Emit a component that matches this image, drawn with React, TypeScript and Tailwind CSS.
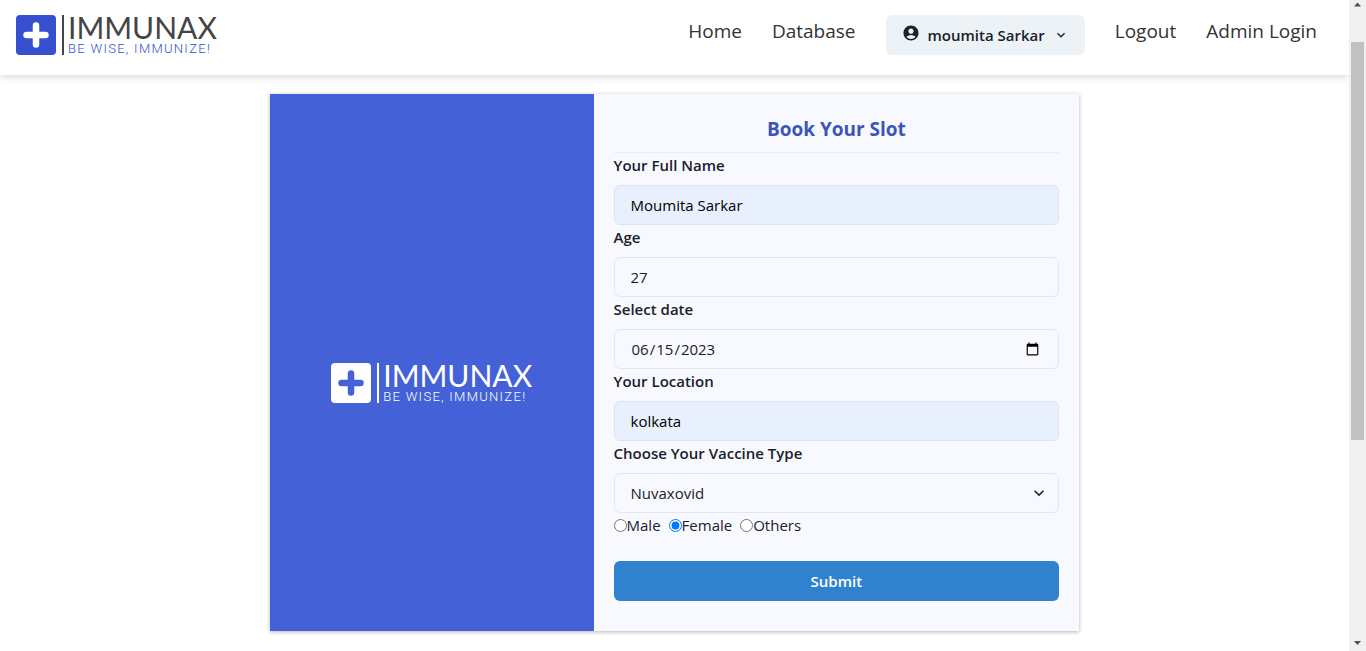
import { useId } from "react";
import type { InputHTMLAttributes, ReactNode } from "react";
import { MdAccountCircle } from "react-icons/md";

function Logo({ inverted = false }: { inverted?: boolean }) {
  return (
    <div className="flex h-10 shrink-0 gap-1">
      <svg viewBox="0 0 48 40" className="h-10 w-12" aria-hidden="true">
        <rect width="40" height="40" rx="4" className={inverted ? "fill-white" : "fill-[#3650d0]"} />
        <path
          d="M20 10.500v19M10.500 20h19"
          fill="none"
          strokeWidth="6.500"
          strokeLinecap="round"
          className={inverted ? "stroke-[#4461d7]" : "stroke-white"}
        />
        <rect x="46" width="2" height="40" className={inverted ? "fill-white" : "fill-[#454545]"} />
      </svg>
      <div className="flex flex-col whitespace-nowrap">
        <span
          className={
            inverted
              ? "font-['Lato',sans-serif] text-[30px] leading-[24px] text-white"
              : "font-['Lato',sans-serif] text-[30px] leading-[24px] text-[#454545]"
          }
        >
          IMMUNAX
        </span>
        <span
          className={
            inverted
              ? "font-['Roboto',sans-serif] text-[13px] leading-[20px] font-light tracking-widest text-white"
              : "font-['Roboto',sans-serif] text-[13px] leading-[20px] font-light tracking-widest text-[#3650d0]"
          }
        >
          BE WISE, IMMUNIZE!
        </span>
      </div>
    </div>
  );
}

function Chevron({ className }: { className: string }) {
  return (
    <svg viewBox="0 0 24 24" className={className} aria-hidden="true">
      <path fill="currentColor" d="M16.59 8.59L12 13.17 7.41 8.59 6 10l6 6 6-6z" />
    </svg>
  );
}

function NavLink({ children }: { children: ReactNode }) {
  return (
    <a href="#" className="text-[19px] leading-[32px] text-[#333]">
      {children}
    </a>
  );
}

type FieldProps = InputHTMLAttributes<HTMLInputElement> & { label: string; filled?: boolean };

function Field({ label, filled = false, ...rest }: FieldProps) {
  const id = useId();
  return (
    <div>
      <label htmlFor={id} className="mb-2 block leading-6 font-semibold">
        {label}
      </label>
      <input
        id={id}
        {...rest}
        className={
          filled
            ? "block h-10 w-full rounded-md border border-[#dde4ef] bg-[#e8f0fe] px-4 text-black"
            : "block h-10 w-full rounded-md border border-[#e2e8f0] bg-transparent px-4"
        }
      />
    </div>
  );
}

function Radio({ label, checked = false }: { label: string; checked?: boolean }) {
  return (
    <label className="flex items-center">
      <input type="radio" name="gender" defaultChecked={checked} className="size-[13px]" />
      {label}
    </label>
  );
}

function Scrollbar() {
  return (
    <div aria-hidden="true" className="sticky top-0 flex h-screen w-[17px] shrink-0 flex-col items-center bg-[#f0f0f0]">
      <svg viewBox="0 0 17 17" className="size-[17px] shrink-0">
        <path d="M5 6.500h7L8.500 2.500z" className="fill-[#505050]" />
      </svg>
      <div className="grow-[25]" />
      <div className="w-[13px] grow-[398] bg-[#c1c1c1]" />
      <div className="grow-[194]" />
      <svg viewBox="0 0 17 17" className="size-[17px] shrink-0">
        <path d="M5 7h7l-3.500 4z" className="fill-[#505050]" />
      </svg>
    </div>
  );
}

export default function App() {
  return (
    <div className="flex bg-white font-['Open_Sans','Noto_Sans',sans-serif] text-[15px] text-[#1a202c]">
      <div className="min-w-0 grow pb-5">
        <header className="flex h-[75px] items-start justify-between pt-[15px] pr-8 pl-4 shadow-[0_2px_8px_rgba(0,0,0,0.15)]">
          <Logo />
          <nav className="flex items-start gap-[30px]">
            <NavLink>Home</NavLink>
            <NavLink>Database</NavLink>
            <button
              type="button"
              className="flex h-10 items-center gap-2 rounded-md bg-[#edf2f7] px-4 font-semibold"
            >
              <MdAccountCircle className="mb-1 size-[18px]" />
              moumita Sarkar
              <Chevron className="size-4" />
            </button>
            <NavLink>Logout</NavLink>
            <NavLink>Admin Login</NavLink>
          </nav>
        </header>

        <main className="mx-auto mt-[19px] flex w-3/5 shadow-[0_1px_4px_rgba(0,0,0,0.3)]">
          <section className="flex w-2/5 items-center justify-center bg-[#4461d7] pt-10">
            <Logo inverted />
          </section>
          <form className="w-3/5 bg-[#f8f9ff] px-5 pt-5 pb-[30px]">
            <h1 className="mb-2 text-center text-[19px] leading-[30px] font-bold text-[#3c55b9]">Book Your Slot</h1>
            <hr className="border-[#e9ebf3]" />
            <Field label="Your Full Name" defaultValue="Moumita Sarkar" filled />
            <Field label="Age" inputMode="numeric" defaultValue="27" />
            <Field label="Select date" type="date" defaultValue="2023-06-15" />
            <Field label="Your Location" defaultValue="kolkata" filled />
            <label htmlFor="vaccine" className="mb-2 block leading-6 font-semibold">
              Choose Your Vaccine Type
            </label>
            <div className="relative">
              <select
                id="vaccine"
                className="block h-10 w-full appearance-none rounded-md border border-[#e2e8f0] bg-transparent px-4"
              >
                <option>Nuvaxovid</option>
              </select>
              <Chevron className="pointer-events-none absolute top-[10px] right-[10px] size-5" />
            </div>
            <div className="flex h-6 gap-2">
              <Radio label="Male" />
              <Radio label="Female" checked />
              <Radio label="Others" />
            </div>
            <button type="submit" className="mt-6 h-10 w-full rounded-md bg-[#3182ce] font-semibold text-white">
              Submit
            </button>
          </form>
        </main>
      </div>
      <Scrollbar />
    </div>
  );
}
